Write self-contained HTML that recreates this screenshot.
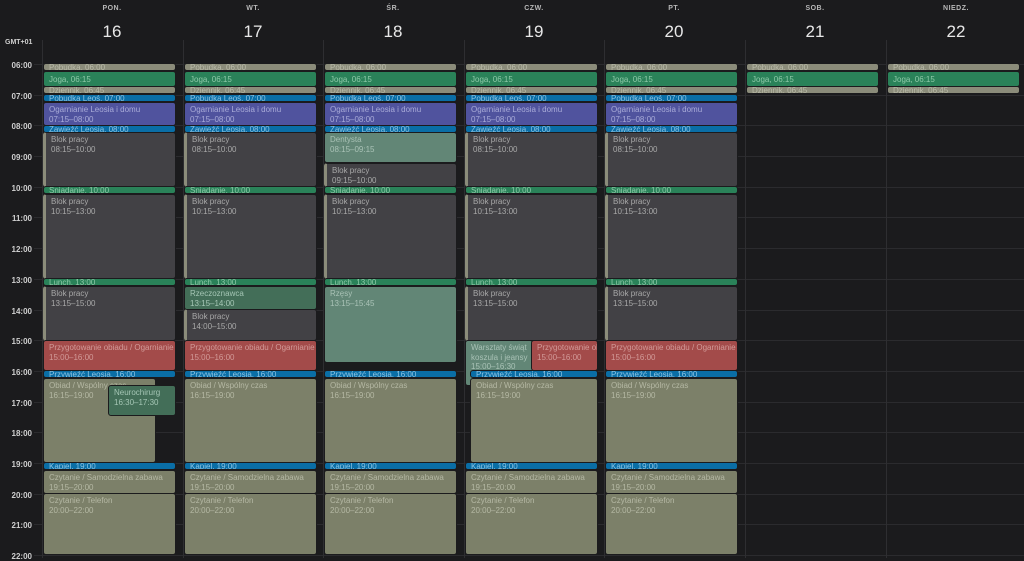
<!DOCTYPE html>
<html><head><meta charset="utf-8"><style>
*{margin:0;padding:0;box-sizing:border-box}
body{width:1024px;height:558px;background:#1b1b1d;overflow:hidden;position:relative;font-family:"Liberation Sans",sans-serif}
.dn{position:absolute;top:5px;width:140px;text-align:center;font-size:7px;font-weight:bold;color:#b8b8b8;letter-spacing:.5px}
.dd{position:absolute;top:22px;width:140px;text-align:center;font-size:17px;color:#e8e8e8}
.hl{position:absolute;left:34px;right:0;height:1px;background:#2b2b2e}
.vl{position:absolute;top:40px;bottom:0;width:1px;background:#2e2e31}
.tl{position:absolute;left:0;width:32px;text-align:right;font-size:8px;font-weight:bold;color:#cfcfcf}
.col{position:absolute;top:0;width:141px;height:558px}
.e{position:absolute;left:1px;width:133px;border-radius:3px;font-size:8px;line-height:8px;padding:1px 5px;overflow:hidden;white-space:nowrap;border:1px solid #1b1b1d}
.e.l{line-height:9.5px;padding-top:2px}
.k{background:#8b8c7a;color:#b9baa8}
.g{background:#2a8259;color:#8fcaa9}
.b{background:#0a6ea6;color:#8cc3e3}
.p{background:#50539e;color:#a9abd8}
.d{background:#424145;color:#a9a9a9;border-left:3px solid #8b8c7a}
.r{background:#a34b4a;color:#d29a98}
.o{background:#7c8069;color:#b5b8a4}
.t{background:#628676;color:#a9c2b6}
.n{background:#436e58;color:#a5c6b5}
</style></head><body>
<div class="tl" style="top:39px;font-size:7px;left:5px;width:40px;text-align:left">GMT+01</div>
<div class="tl" style="top:61px">06:00</div><div class="tl" style="top:92px">07:00</div><div class="tl" style="top:122px">08:00</div><div class="tl" style="top:153px">09:00</div><div class="tl" style="top:184px">10:00</div><div class="tl" style="top:214px">11:00</div><div class="tl" style="top:245px">12:00</div><div class="tl" style="top:276px">13:00</div><div class="tl" style="top:307px">14:00</div><div class="tl" style="top:337px">15:00</div><div class="tl" style="top:368px">16:00</div><div class="tl" style="top:399px">17:00</div><div class="tl" style="top:429px">18:00</div><div class="tl" style="top:460px">19:00</div><div class="tl" style="top:491px">20:00</div><div class="tl" style="top:521px">21:00</div><div class="tl" style="top:552px">22:00</div>
<div class="hl" style="top:64px"></div><div class="hl" style="top:95px"></div><div class="hl" style="top:125px"></div><div class="hl" style="top:156px"></div><div class="hl" style="top:187px"></div><div class="hl" style="top:217px"></div><div class="hl" style="top:248px"></div><div class="hl" style="top:279px"></div><div class="hl" style="top:310px"></div><div class="hl" style="top:340px"></div><div class="hl" style="top:371px"></div><div class="hl" style="top:402px"></div><div class="hl" style="top:432px"></div><div class="hl" style="top:463px"></div><div class="hl" style="top:494px"></div><div class="hl" style="top:524px"></div><div class="hl" style="top:555px"></div>
<div class="vl" style="left:42px"></div><div class="vl" style="left:183px"></div><div class="vl" style="left:323px"></div><div class="vl" style="left:464px"></div><div class="vl" style="left:604px"></div><div class="vl" style="left:745px"></div><div class="vl" style="left:886px"></div>

<div class="dn" style="left:42px">PON.</div><div class="dd" style="left:42px">16</div>
<div class="dn" style="left:183px">WT.</div><div class="dd" style="left:183px">17</div>
<div class="dn" style="left:323px">ŚR.</div><div class="dd" style="left:323px">18</div>
<div class="dn" style="left:464px">CZW.</div><div class="dd" style="left:464px">19</div>
<div class="dn" style="left:604px">PT.</div><div class="dd" style="left:604px">20</div>
<div class="dn" style="left:745px">SOB.</div><div class="dd" style="left:745px">21</div>
<div class="dn" style="left:886px">NIEDZ.</div><div class="dd" style="left:886px">22</div>

<!-- Mon -->
<div class="col" style="left:42px">
<div class="e k" style="top:63px;height:8px;padding-top:0">Pobudka, 06:00</div>
<div class="e g l" style="top:71px;height:16px;padding-top:3px">Joga, 06:15</div>
<div class="e k" style="top:86px;height:8px;padding-top:0">Dziennik, 06:45</div>
<div class="e b" style="top:94px;height:8px;padding-top:0">Pobudka Leoś, 07:00</div>
<div class="e p l" style="top:102px;height:24px">Ogarnianie Leosia i domu<br>07:15–08:00</div>
<div class="e b" style="top:125px;height:8px;padding-top:0">Zawieźć Leosia, 08:00</div>
<div class="e d l" style="top:132px;height:55px">Blok pracy<br>08:15–10:00</div>
<div class="e g" style="top:186px;height:8px;padding-top:0">Śniadanie, 10:00</div>
<div class="e d l" style="top:194px;height:85px">Blok pracy<br>10:15–13:00</div>
<div class="e g" style="top:278px;height:8px;padding-top:0">Lunch, 13:00</div>
<div class="e d l" style="top:286px;height:55px">Blok pracy<br>13:15–15:00</div>
<div class="e r l" style="top:340px;height:31px">Przygotowanie obiadu / Ogarnianie<br>15:00–16:00</div>
<div class="e b" style="top:370px;height:8px;padding-top:0">Przywieźć Leosia, 16:00</div>
<div class="e o l" style="top:378px;height:85px;width:113px">Obiad / Wspólny czas<br>16:15–19:00</div>
<div class="e n l" style="top:385px;height:31px;left:66px;width:68px">Neurochirurg<br>16:30–17:30</div>
<div class="e b" style="top:462px;height:8px;padding-top:0">Kąpiel, 19:00</div>
<div class="e o l" style="top:470px;height:24px">Czytanie / Samodzielna zabawa<br>19:15–20:00</div>
<div class="e o l" style="top:493px;height:62px">Czytanie / Telefon<br>20:00–22:00</div>
</div>
<!-- Tue -->
<div class="col" style="left:183px">
<div class="e k" style="top:63px;height:8px;padding-top:0">Pobudka, 06:00</div>
<div class="e g l" style="top:71px;height:16px;padding-top:3px">Joga, 06:15</div>
<div class="e k" style="top:86px;height:8px;padding-top:0">Dziennik, 06:45</div>
<div class="e b" style="top:94px;height:8px;padding-top:0">Pobudka Leoś, 07:00</div>
<div class="e p l" style="top:102px;height:24px">Ogarnianie Leosia i domu<br>07:15–08:00</div>
<div class="e b" style="top:125px;height:8px;padding-top:0">Zawieźć Leosia, 08:00</div>
<div class="e d l" style="top:132px;height:55px">Blok pracy<br>08:15–10:00</div>
<div class="e g" style="top:186px;height:8px;padding-top:0">Śniadanie, 10:00</div>
<div class="e d l" style="top:194px;height:85px">Blok pracy<br>10:15–13:00</div>
<div class="e g" style="top:278px;height:8px;padding-top:0">Lunch, 13:00</div>
<div class="e n l" style="top:286px;height:24px">Rzeczoznawca<br>13:15–14:00</div>
<div class="e d l" style="top:309px;height:32px">Blok pracy<br>14:00–15:00</div>
<div class="e r l" style="top:340px;height:31px">Przygotowanie obiadu / Ogarnianie<br>15:00–16:00</div>
<div class="e b" style="top:370px;height:8px;padding-top:0">Przywieźć Leosia, 16:00</div>
<div class="e o l" style="top:378px;height:85px">Obiad / Wspólny czas<br>16:15–19:00</div>
<div class="e b" style="top:462px;height:8px;padding-top:0">Kąpiel, 19:00</div>
<div class="e o l" style="top:470px;height:24px">Czytanie / Samodzielna zabawa<br>19:15–20:00</div>
<div class="e o l" style="top:493px;height:62px">Czytanie / Telefon<br>20:00–22:00</div>
</div>
<!-- Wed -->
<div class="col" style="left:323px">
<div class="e k" style="top:63px;height:8px;padding-top:0">Pobudka, 06:00</div>
<div class="e g l" style="top:71px;height:16px;padding-top:3px">Joga, 06:15</div>
<div class="e k" style="top:86px;height:8px;padding-top:0">Dziennik, 06:45</div>
<div class="e b" style="top:94px;height:8px;padding-top:0">Pobudka Leoś, 07:00</div>
<div class="e p l" style="top:102px;height:24px">Ogarnianie Leosia i domu<br>07:15–08:00</div>
<div class="e b" style="top:125px;height:8px;padding-top:0">Zawieźć Leosia, 08:00</div>
<div class="e t l" style="top:132px;height:31px">Dentysta<br>08:15–09:15</div>
<div class="e d l" style="top:163px;height:24px">Blok pracy<br>09:15–10:00</div>
<div class="e g" style="top:186px;height:8px;padding-top:0">Śniadanie, 10:00</div>
<div class="e d l" style="top:194px;height:85px">Blok pracy<br>10:15–13:00</div>
<div class="e g" style="top:278px;height:8px;padding-top:0">Lunch, 13:00</div>
<div class="e t l" style="top:286px;height:77px">Rzęsy<br>13:15–15:45</div>
<div class="e b" style="top:370px;height:8px;padding-top:0">Przywieźć Leosia, 16:00</div>
<div class="e o l" style="top:378px;height:85px">Obiad / Wspólny czas<br>16:15–19:00</div>
<div class="e b" style="top:462px;height:8px;padding-top:0">Kąpiel, 19:00</div>
<div class="e o l" style="top:470px;height:24px">Czytanie / Samodzielna zabawa<br>19:15–20:00</div>
<div class="e o l" style="top:493px;height:62px">Czytanie / Telefon<br>20:00–22:00</div>
</div>
<!-- Thu -->
<div class="col" style="left:464px">
<div class="e k" style="top:63px;height:8px;padding-top:0">Pobudka, 06:00</div>
<div class="e g l" style="top:71px;height:16px;padding-top:3px">Joga, 06:15</div>
<div class="e k" style="top:86px;height:8px;padding-top:0">Dziennik, 06:45</div>
<div class="e b" style="top:94px;height:8px;padding-top:0">Pobudka Leoś, 07:00</div>
<div class="e p l" style="top:102px;height:24px">Ogarnianie Leosia i domu<br>07:15–08:00</div>
<div class="e b" style="top:125px;height:8px;padding-top:0">Zawieźć Leosia, 08:00</div>
<div class="e d l" style="top:132px;height:55px">Blok pracy<br>08:15–10:00</div>
<div class="e g" style="top:186px;height:8px;padding-top:0">Śniadanie, 10:00</div>
<div class="e d l" style="top:194px;height:85px">Blok pracy<br>10:15–13:00</div>
<div class="e g" style="top:278px;height:8px;padding-top:0">Lunch, 13:00</div>
<div class="e d l" style="top:286px;height:55px">Blok pracy<br>13:15–15:00</div>
<div class="e t l" style="top:340px;height:46px;width:68px">Warsztaty świąt<br>koszula i jeansy<br>15:00–16:30</div>
<div class="e r l" style="top:340px;height:31px;left:67px;width:67px">Przygotowanie obiadu<br>15:00–16:00</div>
<div class="e b" style="top:370px;height:8px;padding-top:0;left:6px;width:128px">Przywieźć Leosia, 16:00</div>
<div class="e o l" style="top:378px;height:85px;left:6px;width:128px">Obiad / Wspólny czas<br>16:15–19:00</div>
<div class="e b" style="top:462px;height:8px;padding-top:0">Kąpiel, 19:00</div>
<div class="e o l" style="top:470px;height:24px">Czytanie / Samodzielna zabawa<br>19:15–20:00</div>
<div class="e o l" style="top:493px;height:62px">Czytanie / Telefon<br>20:00–22:00</div>
</div>
<!-- Fri -->
<div class="col" style="left:604px">
<div class="e k" style="top:63px;height:8px;padding-top:0">Pobudka, 06:00</div>
<div class="e g l" style="top:71px;height:16px;padding-top:3px">Joga, 06:15</div>
<div class="e k" style="top:86px;height:8px;padding-top:0">Dziennik, 06:45</div>
<div class="e b" style="top:94px;height:8px;padding-top:0">Pobudka Leoś, 07:00</div>
<div class="e p l" style="top:102px;height:24px">Ogarnianie Leosia i domu<br>07:15–08:00</div>
<div class="e b" style="top:125px;height:8px;padding-top:0">Zawieźć Leosia, 08:00</div>
<div class="e d l" style="top:132px;height:55px">Blok pracy<br>08:15–10:00</div>
<div class="e g" style="top:186px;height:8px;padding-top:0">Śniadanie, 10:00</div>
<div class="e d l" style="top:194px;height:85px">Blok pracy<br>10:15–13:00</div>
<div class="e g" style="top:278px;height:8px;padding-top:0">Lunch, 13:00</div>
<div class="e d l" style="top:286px;height:55px">Blok pracy<br>13:15–15:00</div>
<div class="e r l" style="top:340px;height:31px">Przygotowanie obiadu / Ogarnianie<br>15:00–16:00</div>
<div class="e b" style="top:370px;height:8px;padding-top:0">Przywieźć Leosia, 16:00</div>
<div class="e o l" style="top:378px;height:85px">Obiad / Wspólny czas<br>16:15–19:00</div>
<div class="e b" style="top:462px;height:8px;padding-top:0">Kąpiel, 19:00</div>
<div class="e o l" style="top:470px;height:24px">Czytanie / Samodzielna zabawa<br>19:15–20:00</div>
<div class="e o l" style="top:493px;height:62px">Czytanie / Telefon<br>20:00–22:00</div>
</div>
<!-- Sat -->
<div class="col" style="left:745px">
<div class="e k" style="top:63px;height:8px;padding-top:0">Pobudka, 06:00</div>
<div class="e g l" style="top:71px;height:16px;padding-top:3px">Joga, 06:15</div>
<div class="e k" style="top:86px;height:8px;padding-top:0">Dziennik, 06:45</div>
</div>
<!-- Sun -->
<div class="col" style="left:886px">
<div class="e k" style="top:63px;height:8px;padding-top:0">Pobudka, 06:00</div>
<div class="e g l" style="top:71px;height:16px;padding-top:3px">Joga, 06:15</div>
<div class="e k" style="top:86px;height:8px;padding-top:0">Dziennik, 06:45</div>
</div>
</body></html>
